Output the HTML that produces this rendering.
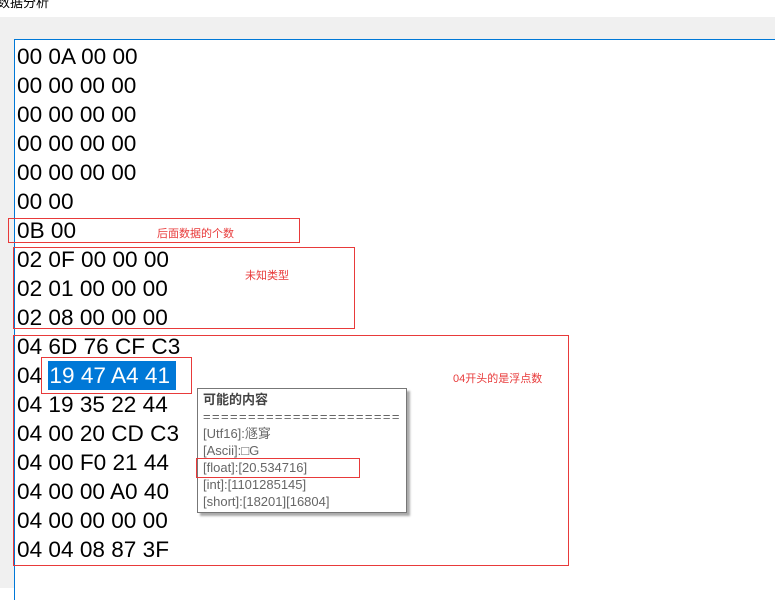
<!DOCTYPE html>
<html><head><meta charset="utf-8"><style>
body{margin:0;width:775px;height:588px;overflow:hidden;background:#fff;position:relative;font-family:"Liberation Sans","Noto Sans CJK SC",sans-serif}
.title{position:absolute;left:-3px;top:-8px;font-size:13px;color:#000}
.gray{position:absolute;left:0;top:17px;width:775px;height:571px;background:#f0f0f0}
.tb{position:absolute;left:14px;top:39px;width:770px;height:560px;background:#fff;border-left:1px solid #0078d7;border-top:1px solid #0078d7}
.hex{position:absolute;left:17px;top:42px;font-size:22.6px;line-height:29px;color:#000;white-space:pre}
.sel{background:#0078d7;color:#fff;padding:2px 6px 2px 1px}
.r{position:absolute;border:1px solid #e83a3a}
.a{position:absolute;color:#e83a3a;font-size:11px;white-space:nowrap}
.tip{position:absolute;left:197px;top:388px;width:203px;height:121px;background:#fff;border:1px solid #777;box-shadow:3px 3px 2px #aaa;font-size:13px;line-height:17px;color:#666;white-space:pre;overflow:hidden}
</style></head><body>
<div class="title">数据分析</div>
<div class="gray"></div>
<div class="tb"></div>
<div class="hex">00 0A 00 00
00 00 00 00
00 00 00 00
00 00 00 00
00 00 00 00
00 00
0B 00
02 0F 00 00 00
02 01 00 00 00
02 08 00 00 00
04 6D 76 CF C3
04 <span class="sel">19 47 A4 41</span>
04 19 35 22 44
04 00 20 CD C3
04 00 F0 21 44
04 00 00 A0 40
04 00 00 00 00
04 04 08 87 3F</div>
<div class="r" style="left:8px;top:218px;width:290px;height:23px"></div>
<div class="r" style="left:13px;top:247px;width:340px;height:80px"></div>
<div class="r" style="left:13px;top:335px;width:554px;height:229px"></div>
<div class="r" style="left:41px;top:357px;width:149px;height:35px"></div>
<div class="a" style="left:157px;top:225px">后面数据的个数</div>
<div class="a" style="left:245px;top:267px">未知类型</div>
<div class="a" style="left:453px;top:370px">04开头的是浮点数</div>
<div class="tip" style="padding:2px 0 0 5px"><b style="color:#444">可能的内容</b>
<span style="letter-spacing:1.4px">======================</span>
[Utf16]:䝇䆤
[Ascii]:□G
[float]:[20.534716]
[int]:[1101285145]
[short]:[18201][16804]</div>
<div class="r" style="left:196px;top:458px;width:162px;height:18px"></div>
</body></html>
